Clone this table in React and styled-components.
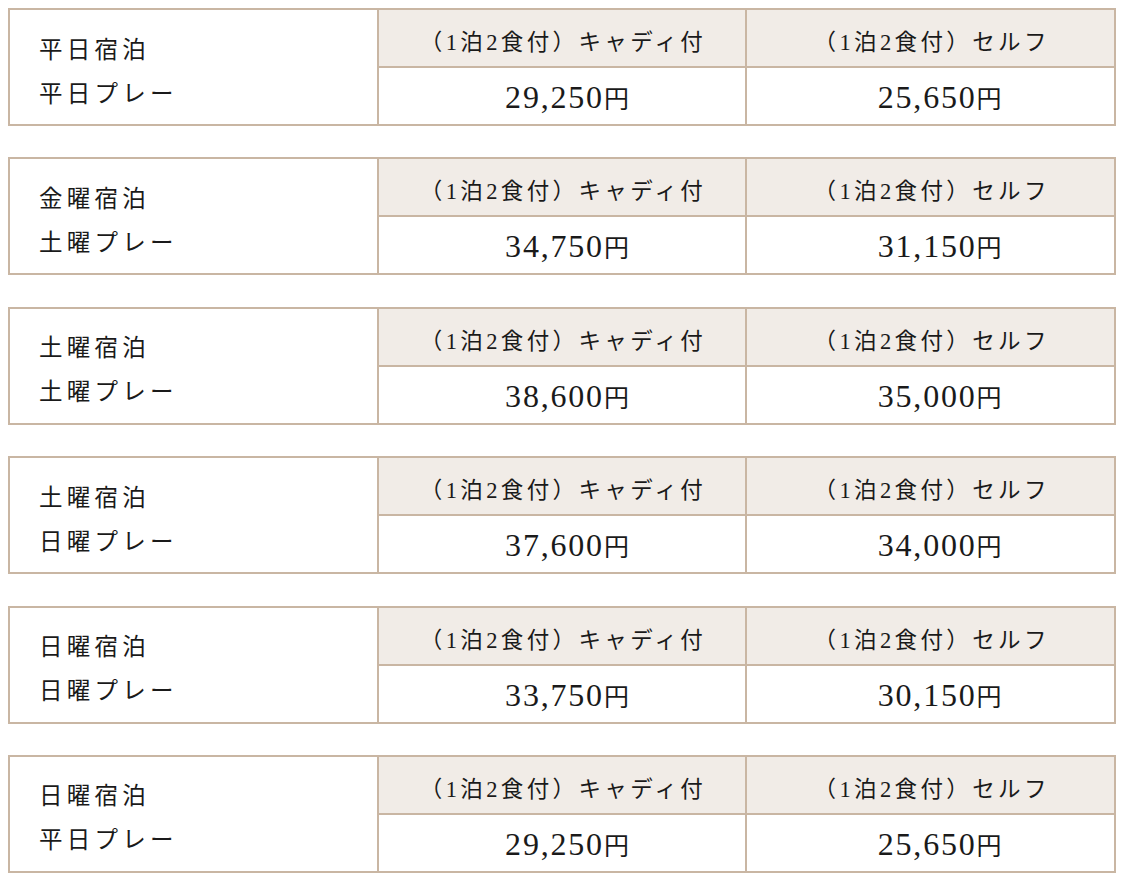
import React from "react";
import styled, { createGlobalStyle } from "styled-components";

const GlobalStyle = createGlobalStyle`
  html, body {
    margin: 0;
    padding: 0;
    background: #fff;
  }
  body {
    font-family: "Liberation Serif", "Noto Sans CJK JP", serif;
    color: #1a1a1a;
  }
`;

const Page = styled.div`
  width: 1108px;
  padding: 8px 0 0 8px;
  display: flex;
  flex-direction: column;
  gap: 31.4px;
`;

const Table = styled.div`
  display: grid;
  grid-template-columns: repeat(3, 1fr);
  grid-template-rows: 56px 56px;
  gap: 2px;
  padding: 2px;
  background: #c9b6a3;
`;

const LabelCell = styled.div`
  grid-row: 1 / span 2;
  background: #fff;
  display: flex;
  flex-direction: column;
  justify-content: center;
  padding: 9px 0 0 29px;
  font-size: 23.5px;
  letter-spacing: 0.18em;
  line-height: 44px;
`;

const HeadCell = styled.div`
  background: #f1ece7;
  display: flex;
  align-items: center;
  justify-content: center;
  padding: 4px 0 0 2px;
  font-size: 22.5px;
  letter-spacing: 0.15em;
  white-space: nowrap;
`;

const PriceCell = styled.div`
  background: #fff;
  display: flex;
  align-items: center;
  justify-content: center;
  padding: ${(p) => (p.$self ? "2px 0 0 18px" : "2px 0 0 10px")};
  font-size: 25px;
`;

const Amount = styled.span`
  line-height: 1;
`;

const Num = styled.span`
  font-size: 32px;
  letter-spacing: 1.8px;
`;

const plans = [
  { stay: "平日宿泊", play: "平日プレー", caddie: "29,250", self: "25,650" },
  { stay: "金曜宿泊", play: "土曜プレー", caddie: "34,750", self: "31,150" },
  { stay: "土曜宿泊", play: "土曜プレー", caddie: "38,600", self: "35,000" },
  { stay: "土曜宿泊", play: "日曜プレー", caddie: "37,600", self: "34,000" },
  { stay: "日曜宿泊", play: "日曜プレー", caddie: "33,750", self: "30,150" },
  { stay: "日曜宿泊", play: "平日プレー", caddie: "29,250", self: "25,650" },
];

const App = () => {
  return (
    <>
      <GlobalStyle />
      <Page>
        {plans.map((p, i) => (
          <Table key={i}>
            <LabelCell>
              <div>{p.stay}</div>
              <div>{p.play}</div>
            </LabelCell>
            <HeadCell>（1泊2食付）キャディ付</HeadCell>
            <HeadCell>（1泊2食付）セルフ</HeadCell>
            <PriceCell>
              <Amount>
                <Num>{p.caddie}</Num>円
              </Amount>
            </PriceCell>
            <PriceCell $self>
              <Amount>
                <Num>{p.self}</Num>円
              </Amount>
            </PriceCell>
          </Table>
        ))}
      </Page>
    </>
  );
};

export default App;
